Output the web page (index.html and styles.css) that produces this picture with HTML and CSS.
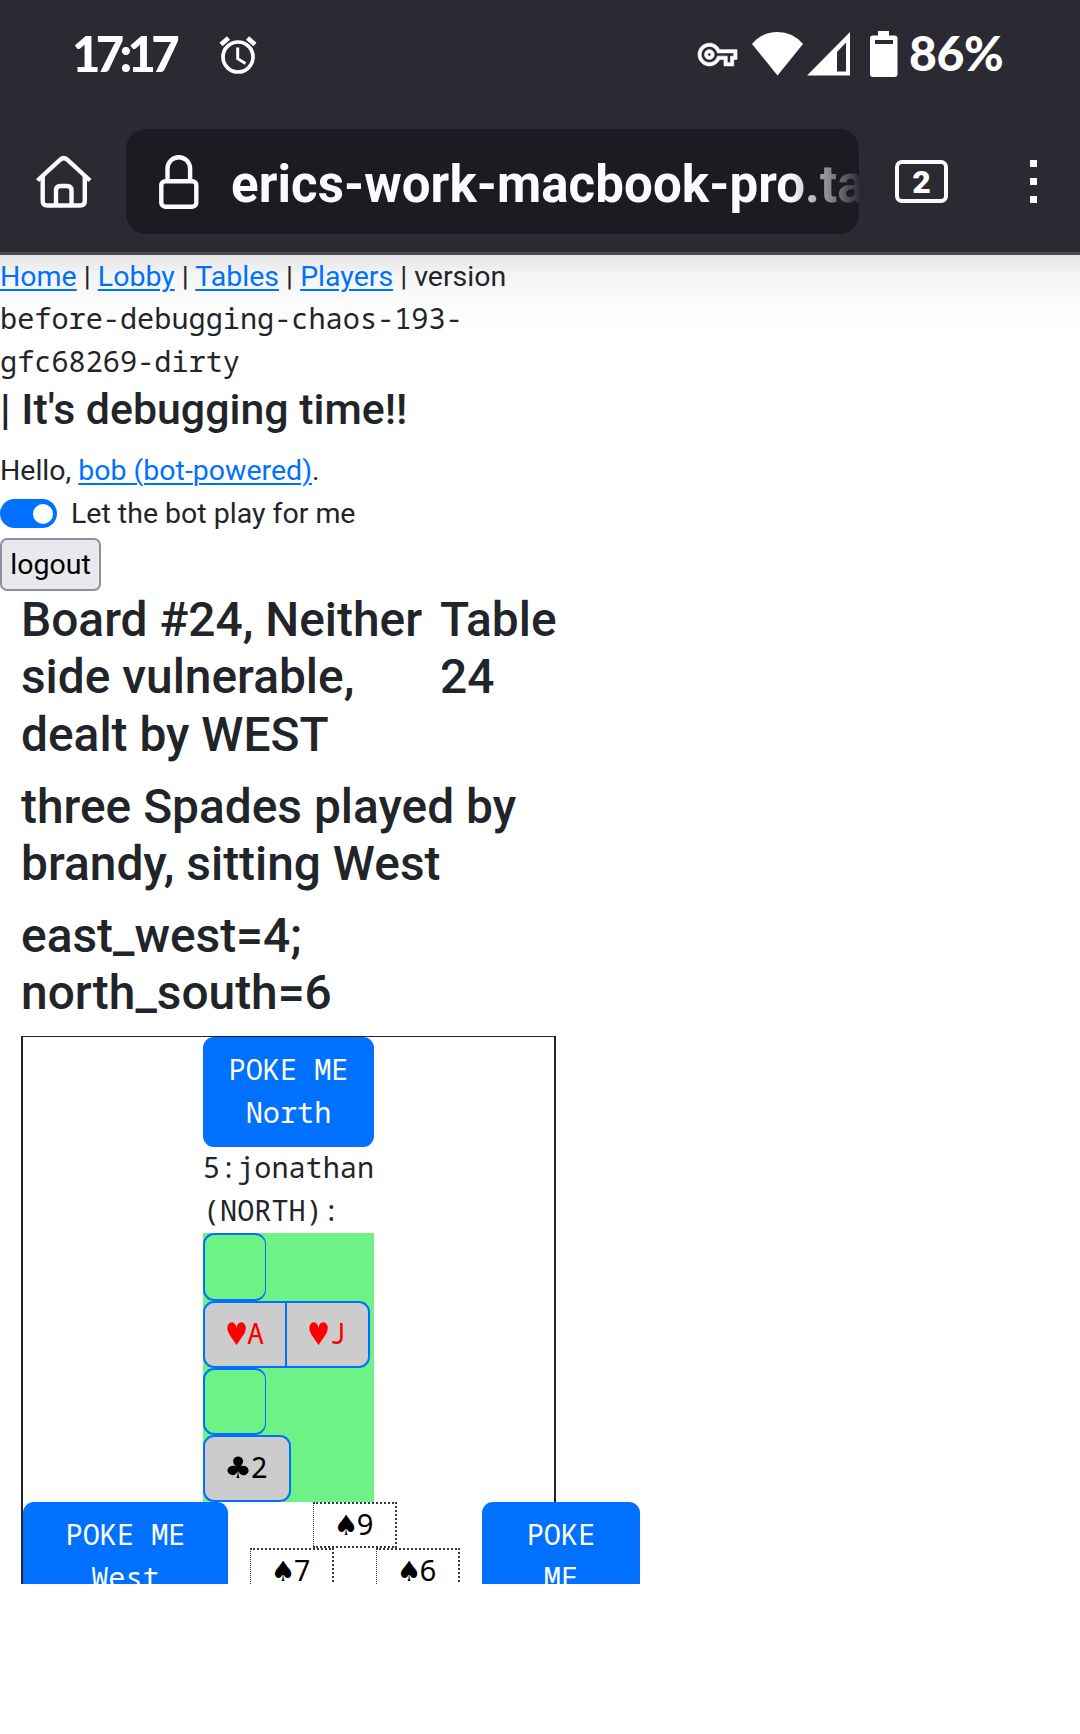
FILE: index.html
```html
<!DOCTYPE html>
<html lang="en">
<head>
<meta charset="utf-8">
<title>Table 24</title>
<link rel="stylesheet" href="styles.css">
</head>
<body>
<header class="chrome">
  <div class="status">
    <span class="clock">17:17</span>
    <svg class="alarm" width="38" height="40" viewBox="0 0 38 40" fill="none" stroke="#fff"><circle cx="19" cy="23" r="15" stroke-width="3.7"/><path d="M2 10.5L9.500 4M36 10.500L28.500 4" stroke-width="4.600"/><path d="M18.700 13.500V24.700L26.500 29.500" stroke-width="3"/></svg>
    <svg class="key" width="39" height="23" viewBox="0 5 24 14" fill="#fff" stroke="#fff" stroke-width=".4"><path d="M22 19h-6v-4h-2.680c-1.140 2.420-3.600 4-6.320 4-3.860 0-7-3.140-7-7s3.140-7 7-7c2.720 0 5.170 1.580 6.320 4H24v6h-2v4zm-4-2h2v-4h2v-2H11.940l-.23-.67C11.010 8.340 9.110 7 7 7c-2.760 0-5 2.240-5 5s2.240 5 5 5c2.110 0 4.010-1.340 4.710-3.330l.23-.67H18v4zM7 15c-1.650 0-3-1.350-3-3s1.350-3 3-3 3 1.350 3 3-1.350 3-3 3zm0-4c-.55 0-1 .45-1 1s.45 1 1 1 1-.45 1-1-.45-1-1-1z"/></svg>
    <svg class="wifi" width="52" height="44" viewBox="0 0 52 44" fill="#fff"><path d="M0 12Q10 0 25.500 0T51 12L25.500 43.500Z"/></svg>
    <svg class="signal" width="44" height="44" viewBox="0 0 44 44"><path fill="#fff" fill-rule="evenodd" d="M0 43.500L43 0V43.500ZM30 20V39.500H39V10.500Z"/></svg>
    <svg class="battery" width="28" height="46" viewBox="0 0 28 46"><path fill="#fff" fill-rule="evenodd" d="M8 0H19V4.500H24.500Q27.500 4.500 27.500 7.500V43Q27.500 46 24.500 46H3Q0 46 0 43V7.500Q0 4.500 3 4.500H8ZM5 9V13H23V9Z"/></svg>
    <span class="level">86%</span>
  </div>
  <div class="toolbar">
    <svg class="home" width="56" height="54" viewBox="0 0 56 54" fill="none" stroke="#fbfbfe" stroke-width="4.400"><path d="M1.500 25.500L24.500 4.500Q27.700 1.800 31 4.500L54 25.500"/><path d="M6.700 21V46Q6.700 50.500 11.500 50.500H44Q48.800 50.500 48.800 46V21M20 50V35.500Q20 31 24.500 31H31Q35.500 31 35.500 35.500V50"/></svg>
    <div class="address">
      <svg class="lock" width="40" height="56" viewBox="0 0 40 56" fill="none" stroke="#fbfbfe" stroke-width="4.400"><rect x="2.300" y="27.200" width="35" height="25.500" rx="4"/><path d="M8.500 27V14.500a11.300 11.300 0 0 1 22.600 0V27"/></svg>
      <span class="url">erics-work-macbook-pro.ta</span>
    </div>
    <span class="tabs">2</span>
    <span class="menu"><i></i><i></i><i></i></span>
  </div>
</header>
<main class="page">
  <nav class="line"><a href="#">Home</a> | <a href="#">Lobby</a> | <a href="#">Tables</a> | <a href="#">Players</a> | version</nav>
  <pre class="version">before-debugging-chaos-193-
gfc68269-dirty</pre>
  <h4 class="banner">| It's debugging time!!</h4>
  <p class="line">Hello, <a href="#">bob (bot-powered)</a>.</p>
  <label class="line switch"><span class="track"></span>Let the bot play for me</label>
  <button class="logout">logout</button>
  <section class="board">
    <div class="titles">
      <h2>Board #24, Neither side vulnerable, dealt by WEST</h2>
      <h2>Table 24</h2>
    </div>
    <h2 class="contract">three Spades played by brandy, sitting West</h2>
    <h2 class="score">east_west=4; north_south=6</h2>
    <div class="felt">
      <div class="north">
        <button class="poke">POKE ME<br>North</button>
        <div class="player">5:jonathan<br>(NORTH):</div>
        <div class="hand">
          <div class="suit"><span class="void"></span></div>
          <div class="suit"><span class="card red"><b class="heart">♥</b>A</span><span class="card red"><b class="heart">♥</b>J</span></div>
          <div class="suit"><span class="void"></span></div>
          <div class="suit"><span class="card club"><b class="clubs">♣</b>2</span></div>
        </div>
      </div>
      <div class="middle">
        <button class="poke">POKE ME<br>West</button>
        <div class="trick">
          <span class="played top"><b>♠</b>9</span>
          <span class="played"><b>♠</b>7</span>
          <span class="played"><b>♠</b>6</span>
        </div>
        <button class="poke">POKE<br>ME</button>
      </div>
    </div>
  </section>
</main>
</body>
</html>
```
FILE: styles.css
```css
* { box-sizing: border-box; }
body { margin: 0; background: #fff; color: #212529; font: 28.5px/43px Roboto, sans-serif; }
a { color: #0071ff; text-underline-offset: 3px; text-decoration-thickness: 2px; }
h2, h4, p, pre { margin: 0; font-weight: 500; }
p { font-weight: 400; }
svg { flex: none; display: block; }

.chrome { height: 255px; background: #2b2a33; border-bottom: 3px solid #4a4950; color: #fff; }
.status { height: 129px; display: flex; align-items: flex-start; padding-left: 72px; }
.clock, .level { font: 900 49px/50px Lato, sans-serif; margin-top: 28px; white-space: nowrap; flex: none; }
.clock { width: 147px; letter-spacing: -4.7px; }
.level { font-size: 48px; letter-spacing: -0.3px; }
.alarm { margin-top: 34px; }
.key { margin: 43px 15px 0 441px; overflow: visible; }
.wifi { margin-top: 32px; }
.signal { margin: 32px 19px 0 3px; }
.battery { margin: 31px 11px 0 0; }

.toolbar { height: 105px; display: flex; align-items: center; }
.home { margin: 0 34px 0 36px; }
.address { width: 733px; height: 105px; border-radius: 20px; background: #1c1b22; display: flex; align-items: center; overflow: hidden; padding-left: 33px; }
.lock { margin-right: 32px; }
.url { flex: 1; overflow: hidden; white-space: nowrap; font: 700 51px/60px Roboto, sans-serif; letter-spacing: 0.1px; color: #fbfbfe; margin-top: 6px; -webkit-mask-image: linear-gradient(to right, #000 560px, transparent 635px); mask-image: linear-gradient(to right, #000 560px, transparent 635px); }
.tabs { width: 53px; height: 43px; margin-left: 36px; border: 4px solid #fbfbfe; border-radius: 7px; font: 900 32px/36px Roboto, sans-serif; text-align: center; }
.menu { margin-left: 82px; display: grid; gap: 11px; }
.menu i { width: 7px; height: 7px; background: #fbfbfe; }

.page { height: 1329px; overflow: hidden; background: linear-gradient(#e5e5e5, #f4f4f4 20px, #fcfcfc 50px, #fff 75px); }
.line { height: 43px; white-space: nowrap; }
.version, .felt, .felt button { font-family: "Droid Sans Mono", "Noto Sans Mono", "DejaVu Sans Mono", monospace; }
.version { font-size: 28.57px; font-weight: 400; margin: -2px 0 2px; }
.banner { font-size: 42.86px; line-height: 51px; margin-bottom: 14px; }
.switch { display: flex; align-items: center; gap: 14px; }
.track { width: 57px; height: 29px; border-radius: 15px; background: #0071ff; padding: 4.5px; display: flex; justify-content: flex-end; }
.track::after { content: ""; width: 20px; height: 20px; border-radius: 50%; background: #fff; }
.logout { display: block; margin: 3px 0 0; width: 101px; height: 53px; padding: 0; border: 2px solid #8f8f9d; border-radius: 7px; background: #e9e9ed; color: #000; font: 28.5px/43px Roboto, sans-serif; }

.board { width: 556px; padding: 1px 0 0 21px; }
.board h2 { font-size: 47.85px; line-height: 57.4px; }
.titles { display: flex; justify-content: space-between; margin-bottom: 14.3px; }
.titles h2:first-child { width: 408px; }
.titles h2:last-child { width: 116px; }
.contract { margin-bottom: 14.3px; }
.score { width: 400px; margin-bottom: 14px; }
.felt { border: 2px solid #212529; border-top-width: 1px; height: 900px; }
.poke { display: block; width: 100%; height: 110px; border: 0; border-radius: 11px; background: #0071ff; color: #fff; font-size: 28.57px; line-height: 43px; padding: 0 0 4px; white-space: nowrap; }
.north { width: 171px; margin: 0 auto; }
.player { white-space: nowrap; height: 86px; margin: -1px 0 1px; }
.hand { background: #6ef286; }
.suit { height: 67.25px; display: flex; }
.void { width: 63px; border: 2px solid #0071ff; border-right-width: 1px; border-radius: 11px; }
.card, .played { text-align: center; white-space: nowrap; }
.card { height: 100%; border: 2px solid #0071ff; background: #ccc; width: 84px; line-height: 60px; color: #000; }
.red { color: #f00; }
.card:first-child { border-radius: 11px 0 0 11px; }
.card:last-child { border-radius: 0 11px 11px 0; }
.card + .card { margin-left: -2px; width: 85px; }
.card.club { width: 88px; border-radius: 11px; line-height: 60px; }
.middle { display: grid; grid-template-columns: 205px 210px 158px; gap: 22px; align-items: start; }
.trick { display: grid; grid-template-columns: 84px 84px; justify-content: space-between; align-content: start; color: #000; }
.played { height: 46px; border: 2px dotted #343a40; border-left-width: 1px; line-height: 40px; }
.played.top { grid-column: 1 / 3; width: 84px; justify-self: center; }
.felt b { display: inline-flex; justify-content: center; width: 21px; font: 400 28px/20px "DejaVu Sans", sans-serif; }
.felt .heart { transform: scale(.92, 1.12); }
.felt .clubs { width: 24px; transform: scale(1.12, 1.05); }
```
